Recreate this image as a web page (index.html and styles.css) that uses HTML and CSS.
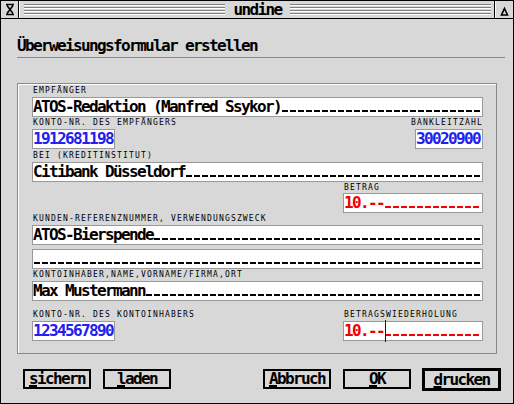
FILE: index.html
```html
<!DOCTYPE html>
<html lang="de">
<head>
	<meta charset="UTF-8">
	<title>undine</title>
	<link rel="stylesheet" href="styles.css">
</head>
<body>
	<div class="window">
		<div class="titlebar">
			<div class="closer">
				<svg width="17" height="17" viewBox="0 0 17 17">
					<path d="M5 3.5h8M5 13.5h8M6 4.5l6 8M12 4.5l-6 8" stroke="#000" stroke-width="1.6" fill="none"/>
				</svg>
			</div>
			<div class="mover">
				<div class="stripes"></div>
				<div class="title">undine</div>
				<div class="stripes"></div>
			</div>
			<div class="fuller">
				<svg width="18" height="17" viewBox="0 0 18 17">
					<path d="M9.5 7.5L12.5 14H6.5Z" stroke="#000" stroke-width="1.6" fill="none"/>
				</svg>
			</div>
		</div>

		<h1 class="heading">Überweisungsformular erstellen</h1>

		<div class="group">
			<div class="label">EMPFÄNGER</div>
			<div class="field">ATOS-Redaktion (Manfred Ssykor)<span class="fill">_________________________</span></div>

			<div class="row">
				<div class="col">
					<div class="label">KONTO-NR. DES EMPFÄNGERS</div>
					<div class="field konto blue">1912681198</div>
				</div>
				<div class="col right">
					<div class="label">BANKLEITZAHL</div>
					<div class="field blz blue">30020900</div>
				</div>
			</div>

			<div class="label gap1">BEI (KREDITINSTITUT)</div>
			<div class="field">Citibank Düsseldorf<span class="fill">_____________________________________</span></div>

			<div class="row end">
				<div class="col">
					<div class="label short">BETRAG</div>
					<div class="field betrag red">10.--<span class="fill">____________</span></div>
				</div>
			</div>

			<div class="label">KUNDEN-REFERENZNUMMER, VERWENDUNGSZWECK</div>
			<div class="field">ATOS-Bierspende<span class="fill">_________________________________________</span></div>
			<div class="field gap4"><span class="fill">________________________________________________________</span></div>

			<div class="label">KONTOINHABER,NAME,VORNAME/FIRMA,ORT</div>
			<div class="field">Max Mustermann<span class="fill">__________________________________________</span></div>

			<div class="row">
				<div class="col">
					<div class="label gap8">KONTO-NR. DES KONTOINHABERS</div>
					<div class="field konto blue">1234567890</div>
				</div>
				<div class="col">
					<div class="label gap8">BETRAGSWIEDERHOLUNG</div>
					<div class="field betrag red edit">10.--<span class="fill">____________</span><span class="caret"></span></div>
				</div>
			</div>
		</div>

		<div class="buttons">
			<button class="btn"><u>s</u>ichern</button>
			<button class="btn"><u>l</u>aden</button>
			<button class="btn far"><u>A</u>bbruch</button>
			<button class="btn"><u>O</u>K</button>
			<button class="btn default"><u>d</u>rucken</button>
		</div>
	</div>
</body>
</html>
```

FILE: styles.css
```css
*{
	margin: 0;
	padding: 0;
	box-sizing: border-box;
}
body{
	background: #d8d8d8;
	font-family: "DejaVu Sans Mono", monospace;
	color: #000;
}
.window{
	width: 514px;
	height: 404px;
	border: 1px solid #000;
	background: #d8d8d8;
	display: flex;
	flex-direction: column;
}

/* title bar */
.titlebar{
	height: 18px;
	border-bottom: 1px solid #000;
	display: flex;
	flex-shrink: 0;
}
.closer{
	width: 18px;
	border-right: 1px solid #000;
}
.closer svg,
.fuller svg{
	display: block;
}
.mover{
	flex: 1;
	display: flex;
	align-items: flex-start;
	border-left: 1px solid #fff;
	padding: 0 3px 0 4px;
}
.stripes{
	flex: 1;
	height: 12px;
	margin-top: 3px;
	background: repeating-linear-gradient(to bottom, #808080 0, #808080 1px, #fff 1px, #fff 2px, transparent 2px, transparent 3px);
}
.title{
	padding: 0 8px;
	font-size: 16px;
	font-weight: bold;
	line-height: 17px;
	letter-spacing: -1.63px;
}
.fuller{
	width: 19px;
	border-left: 1px solid #000;
	box-shadow: inset 1px 0 0 #fff;
}

/* heading */
.heading{
	margin: 19px 8px 0 16px;
	padding-bottom: 3px;
	border-bottom: 1px solid #888;
	font-size: 16px;
	font-weight: bold;
	line-height: 16px;
	letter-spacing: -1.63px;
}

/* form box */
.group{
	margin: 25px 16px 0 16px;
	border: 1px solid #888;
	box-shadow: inset 1px 1px 0 #fff;
	padding: 1px 13px 12px 14px;
}
.label{
	height: 12px;
	line-height: 12px;
	padding-left: 1px;
	font-size: 8px;
	letter-spacing: 1.18px;
	white-space: pre;
}
.label.short{
	height: 11px;
	line-height: 11px;
}
.gap1{
	margin-top: 1px;
}
.gap4{
	margin-top: 4px;
}
.gap8{
	margin-top: 8px;
}
.field{
	height: 20px;
	border: 1px solid #999;
	background: #fff;
	font-size: 16px;
	font-weight: bold;
	line-height: 18px;
	letter-spacing: -1.63px;
	white-space: pre;
	overflow: hidden;
}
/* Platzhalter-Unterstriche als gestrichelte Linie */
.fill{
	color: transparent;
	background-image: repeating-linear-gradient(to right, #000 0, #000 6px, transparent 6px, transparent 8px);
	background-size: 100% 2px;
	background-repeat: no-repeat;
	background-position: left 1px bottom 4px;
}
.red .fill{
	background-image: repeating-linear-gradient(to right, #f00000 0, #f00000 6px, transparent 6px, transparent 8px);
}
.blue{
	color: #2020f0;
}
.red{
	color: #f00000;
}
.konto{
	width: 83px;
}
.blz{
	width: 68px;
}
.betrag{
	width: 140px;
}
.edit{
	position: relative;
	overflow: visible;
}
.caret{
	position: absolute;
	left: 41px;
	top: -2px;
	width: 1px;
	height: 22px;
	background: #101060;
}
.row{
	display: flex;
	justify-content: space-between;
}
.row.end{
	justify-content: flex-end;
}
.col.right{
	display: flex;
	flex-direction: column;
	align-items: flex-end;
}

/* buttons */
.buttons{
	display: flex;
	align-items: flex-start;
	margin-top: 14px;
	padding-left: 22px;
}
.btn{
	width: 68px;
	height: 20px;
	margin-top: 1px;
	border: 2px solid #000;
	background: #d8d8d8;
	color: #000;
	font-family: "DejaVu Sans Mono", monospace;
	font-size: 16px;
	font-weight: bold;
	line-height: 16px;
	letter-spacing: -1.63px;
	text-align: center;
}
.btn + .btn{
	margin-left: 12px;
}
.btn.far{
	margin-left: 92px;
}
.btn.default{
	width: 79px;
	height: 23px;
	margin-top: 0;
	margin-left: 11px;
	border-width: 3px;
	line-height: 17px;
}
.btn u{
	text-decoration-thickness: 2px;
}
```
